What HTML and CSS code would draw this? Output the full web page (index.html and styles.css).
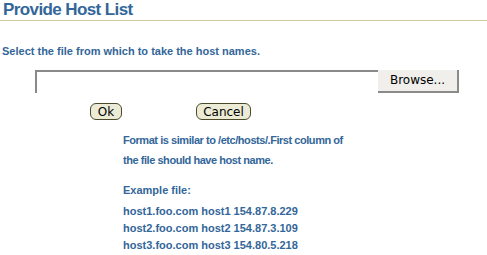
FILE: index.html
```html
<!DOCTYPE html>
<html lang="en">
<head>
    <meta charset="UTF-8">
    <title>Provide Host List</title>
    <link rel="stylesheet" href="styles.css">
</head>
<body>

<h1 class="title">Provide Host List</h1>

<p class="prompt">Select the file from which to take the host names.</p>

<!-- file chooser -->
<div class="file-row">
    <input class="file-path" type="text">
    <button class="browse">Browse...</button>
</div>

<div class="actions">
    <button class="pill ok">Ok</button>
    <button class="pill cancel">Cancel</button>
</div>

<!-- help text -->
<div class="help">
    <p class="help-format">Format is similar to /etc/hosts/.First column of<br>the file should have host name.</p>
    <p class="help-label">Example file:</p>
    <p class="help-lines">host1.foo.com host1 154.87.8.229<br>host2.foo.com host2 154.87.3.109<br>host3.foo.com host3 154.80.5.218</p>
</div>

</body>
</html>
```

FILE: styles.css
```css
body { margin: 0; font-family: "Liberation Sans", Arial, sans-serif; color: #336699; background: #fff; }

.title {
    margin: 0;
    padding: 0 0 0 3px;
    font-size: 17px;
    letter-spacing: -0.6px;
    line-height: 20px;
    font-weight: bold;
    color: #336699;
    border-bottom: 1px solid #cccc99;
}

.prompt { margin: 23px 0 0 2px; font-size: 11px; font-weight: bold; line-height: 14px; }

.file-row { display: flex; margin: 12px 0 0 35px; }

.file-path {
    width: 343px;
    height: 23px;
    box-sizing: border-box;
    margin: 0;
    border-style: solid;
    border-width: 2px 0 0 2px;
    border-color: #8a8a8a;
    background: #fff;
}

.browse {
    width: 81px;
    height: 23px;
    margin: 0;
    padding: 0 0 2px;
    box-sizing: border-box;
    border: none;
    border-right: 2px solid #8a8a8a;
    border-bottom: 2px solid #8a8a8a;
    background: #f0efeb;
    font-family: "DejaVu Sans", sans-serif;
    font-size: 12px;
    color: #000;
}

.actions { display: flex; margin: 10px 0 0 90px; }

.pill {
    height: 17px;
    margin: 0;
    padding: 0 6px;
    border: 1px solid #4a4a2a;
    border-radius: 6px;
    background: #ececd6;
    font-family: "DejaVu Sans", sans-serif;
    font-size: 12px;
    line-height: 14px;
    color: #000;
}

.ok { width: 32px; }
.cancel { width: 55px; margin-left: 74px; }

.help { margin: 10px 0 0 123px; font-size: 11px; font-weight: bold; }
.help p { margin: 0; }
.help-format { line-height: 20px; letter-spacing: -0.45px; }
.help-label { margin-top: 10px !important; line-height: 20px; }
.help-lines { line-height: 17px; margin-top: 3px !important; }
```
